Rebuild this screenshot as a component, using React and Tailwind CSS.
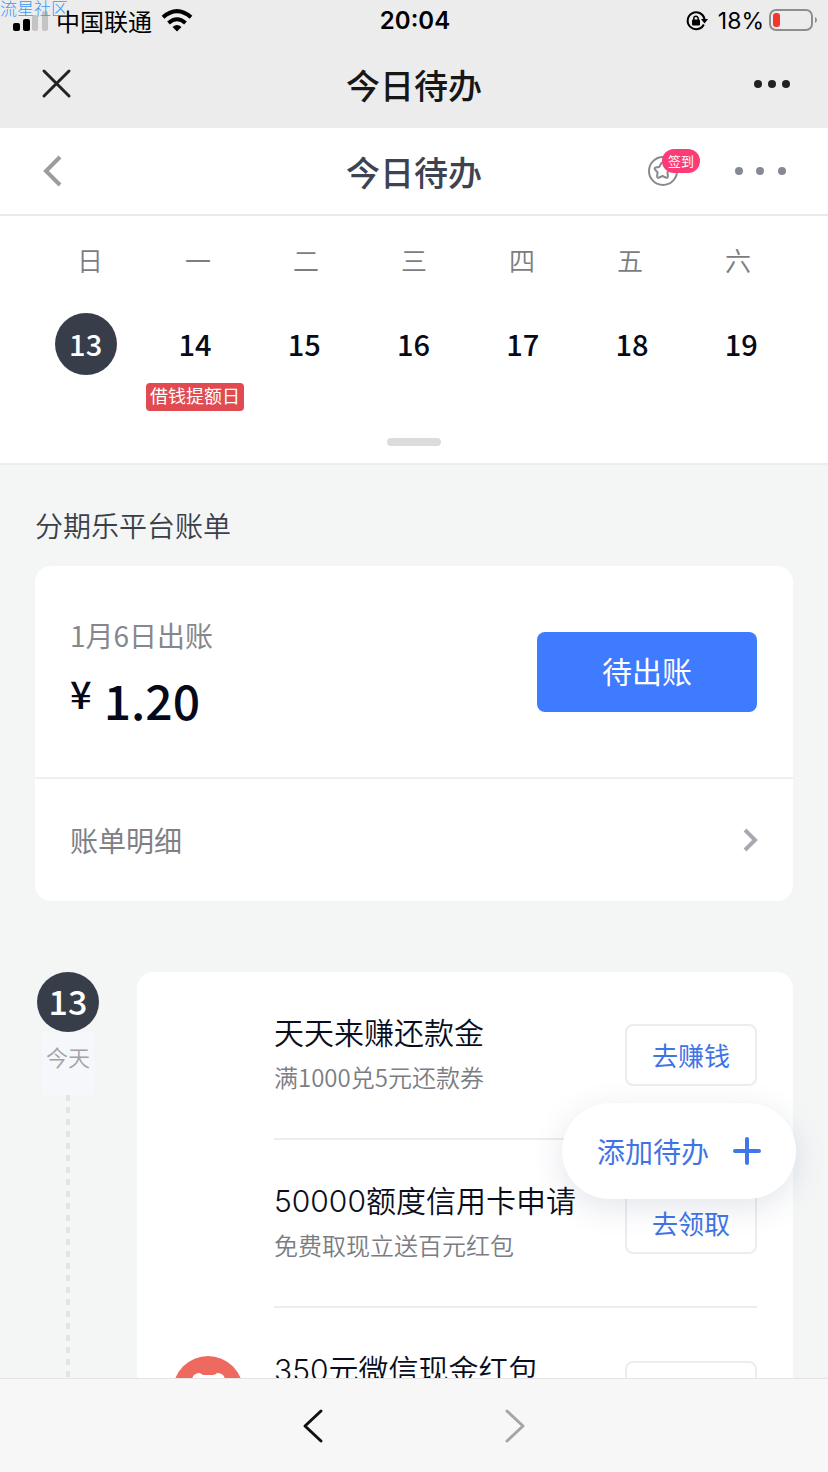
const DAYS = [
  { week: '日', date: 13, active: true },
  { week: '一', date: 14, tag: '借钱提额日' },
  { week: '二', date: 15 },
  { week: '三', date: 16 },
  { week: '四', date: 17 },
  { week: '五', date: 18 },
  { week: '六', date: 19 },
]

const TASKS = [
  { title: '天天来赚还款金', desc: '满1000兑5元还款券', action: '去赚钱' },
  { title: '50000额度信用卡申请', desc: '免费取现立送百元红包', action: '去领取' },
  { title: '350元微信现金红包', desc: '微信现金红包天天领', action: '去领取', icon: true },
]

function StatusBar() {
  return (
    <div className="relative grid grid-cols-3 items-center h-[42px] pl-3 pr-2.5 text-black">
      <span className="absolute left-0 top-0 text-[17px] leading-4 font-light text-[#3d97f5]">流星社区</span>
      <div className="flex items-center">
        <svg width="36" height="20" viewBox="0 0 36 20" aria-hidden="true">
          <rect x="1" y="12" width="7" height="8" rx="2" />
          <rect x="11" y="8" width="7" height="12" rx="2" />
          <rect x="20" y="4" width="6" height="16" rx="2" fill="#c4c4c4" />
          <rect x="30" y="0" width="6" height="20" rx="2" fill="#c4c4c4" />
        </svg>
        <span className="ml-2 text-[24px] leading-8">中国联通</span>
        <svg className="ml-2" width="34" height="24" viewBox="0 0 34 24" aria-hidden="true">
          <path d="M3 8.200Q17 -4 31 8.200" fill="none" stroke="#000" strokeWidth="4" />
          <path d="M8.500 14Q17 6.500 25.500 14" fill="none" stroke="#000" strokeWidth="4" />
          <path d="M12.500 18Q17 14 21.500 18L17 22.500Z" />
        </svg>
      </div>
      <span className="text-center font-[Inter,sans-serif] text-[24px] leading-8 font-semibold">20:04</span>
      <div className="flex items-center justify-end">
        <svg width="22" height="22" viewBox="0 0 22 22" fill="none" aria-hidden="true">
          <path d="M17.800 14.500A8.500 8.500 0 1 1 18.500 9" stroke="#000" strokeWidth="2" />
          <path d="M15 9H22L18.500 13.500Z" fill="#000" />
          <rect x="6" y="9.500" width="8" height="6" rx="1" fill="#000" />
          <path d="M7.800 10V8.500a2.200 2.200 0 0 1 4.400 0V10" stroke="#000" strokeWidth="1.500" />
        </svg>
        <span className="ml-2.5 font-[Inter,sans-serif] text-[23px] leading-8">18%</span>
        <svg className="ml-1" width="50" height="24" viewBox="0 0 50 24" aria-hidden="true">
          <rect x="2" y="1" width="42" height="20" rx="6" fill="none" stroke="#8e8e8e" strokeWidth="2" />
          <rect x="5" y="4" width="7" height="14" rx="3" fill="#f5362b" />
          <path d="M47 8v6q2-1 2-3t-2-3z" fill="#8e8e8e" />
        </svg>
      </div>
    </div>
  )
}

function BrowserHeader() {
  return (
    <div className="grid grid-cols-3 items-center h-[86px] pb-1 px-9">
      <button aria-label="关闭" className="justify-self-start p-1">
        <svg width="32" height="32" viewBox="0 0 32 32" stroke="#222" strokeWidth="3" strokeLinecap="round">
          <path d="M4 4L29 29M29 4L4 29" />
        </svg>
      </button>
      <h1 className="pt-1 text-center text-[34px] leading-10 font-medium text-[#171717]">今日待办</h1>
      <button aria-label="更多" className="justify-self-end">
        <svg width="40" height="12" viewBox="0 0 40 12" fill="#222">
          <circle cx="6" cy="7" r="4" />
          <circle cx="20" cy="7" r="4" />
          <circle cx="34" cy="7" r="4" />
        </svg>
      </button>
    </div>
  )
}

function PageHeader() {
  return (
    <div className="grid grid-cols-3 items-center h-[88px] px-10 bg-white border-b-2 border-[#e9e9e9]">
      <button aria-label="返回" className="justify-self-start">
        <svg width="24" height="32" viewBox="0 0 24 32" fill="none" stroke="#9c9c9e" strokeWidth="4">
          <path d="M20 2L6 16L20 30" />
        </svg>
      </button>
      <h2 className="pt-0.5 text-center text-[34px] leading-10 font-medium text-[#3d4350]">今日待办</h2>
      <div className="flex items-center justify-end gap-8">
        <button aria-label="签到" className="relative w-14 h-8">
          <svg width="36" height="32" viewBox="0 0 36 32" fill="none" stroke="#87898e" strokeWidth="2">
            <circle cx="19" cy="16" r="14" />
            <path
              d="M18.500 7.500q1 0 1.700 1.500l1.400 2.800 3.300.6q2.500.5.8 2.500l-2.300 2.500.5 3.600q0 2.500-2.200 1.500L18.500 21l-3.200 1.500q-2.200 1-2.200-1.500l.5-3.600-2.300-2.500q-1.700-2 .8-2.500l3.300-.6L16.800 9q.7-1.500 1.700-1.500z"
              strokeLinejoin="round"
            />
          </svg>
          <span className="absolute left-[18px] -top-1.5 rounded-full bg-[#fd3b77] px-1.5 text-[13px] leading-6 whitespace-nowrap text-white">
            签到
          </span>
        </button>
        <button aria-label="更多">
          <svg width="56" height="12" viewBox="0 0 56 12" fill="#858994">
            <circle cx="7" cy="6" r="4" />
            <circle cx="28" cy="6" r="4" />
            <circle cx="50" cy="6" r="4" />
          </svg>
        </button>
      </div>
    </div>
  )
}

function Calendar() {
  return (
    <section className="bg-white border-b-2 border-[#ebedee] pt-6">
      <div className="grid grid-cols-7 px-9">
        {DAYS.map((d) => (
          <span key={d.week} className="text-center text-[26px] leading-10 font-[350] text-[#7b7d82]">
            {d.week}
          </span>
        ))}
      </div>
      <div className="grid grid-cols-7 pl-[31px] pr-8 mt-[33px]">
        {DAYS.map((d) => (
          <div key={d.date} className="flex flex-col items-center h-[100px]">
            <button
              className={`size-[62px] rounded-full pb-0.5 text-[29px] leading-8 font-medium ${
                d.active ? 'bg-[#383d4a] text-white' : 'text-[#080a18]'
              }`}
            >
              {d.date}
            </button>
            {d.tag && (
              <span className="mt-2 rounded-sm bg-[#e04a50] px-1 pb-1 text-[18px] leading-6 whitespace-nowrap text-white">
                {d.tag}
              </span>
            )}
          </div>
        ))}
      </div>
      <div className="flex justify-center pt-[25px] pb-[17px]">
        <span className="w-[54px] h-2 rounded-full bg-[#dcdcde]" />
      </div>
    </section>
  )
}

function BillCard() {
  return (
    <section>
      <h3 className="text-[28px] leading-10 font-[350] text-[#3b3f49]">分期乐平台账单</h3>
      <div className="mt-[21px] rounded-2xl bg-white">
        <div className="flex items-center justify-between h-[211px] pl-[35px] pr-9">
          <div>
            <p className="text-[28px] leading-10 text-[#85878c]">1月6日出账</p>
            <p className="mt-4 pb-0.5 flex items-center gap-3 font-medium text-[#050919]">
              <span className="pb-3 text-[38px] leading-10">¥</span>
              <span className="text-[48px] leading-14">1.20</span>
            </p>
          </div>
          <button className="w-[220px] h-20 rounded-lg bg-[#3f7bff] pb-0.5 text-[30px] text-white">待出账</button>
        </div>
        <a href="#detail" className="flex items-center justify-between h-[124px] border-t-2 border-[#eef0f0] px-[35px] text-[28px] text-[#7f8186]">
          账单明细
          <svg width="16" height="24" viewBox="0 0 16 24" fill="none" stroke="#a9aab0" strokeWidth="4">
            <path d="M3 2L13 12L3 22" />
          </svg>
        </a>
      </div>
    </section>
  )
}

function TaskRow({ task, last }) {
  return (
    <li className="flex gap-[30px] h-[168px] pl-[35px] pr-9">
      <div className="flex items-center w-[72px] shrink-0">
        {task.icon && (
          <svg width="72" height="72" viewBox="0 0 72 72" aria-hidden="true">
            <circle cx="36" cy="35" r="35" fill="#ee6a61" />
            <path d="M20 26q0-5 2-7t6-2q2 2 4 2h9q2 0 4-2 4 0 6 2t2 7v26H20z" fill="#fff" />
          </svg>
        )}
      </div>
      <div className={`flex flex-1 items-center justify-between ${last ? '' : 'border-b-2 border-[#ededee]'}`}>
        <div>
          <p className="font-[Inter,'Noto_Sans_CJK_SC',sans-serif] text-[30px] leading-12 font-[350] whitespace-nowrap text-[#0a0e1c]">
            {task.title}
          </p>
          <p className="pb-1 text-[24px] leading-10 font-[350] whitespace-nowrap text-[#7b7d83]">{task.desc}</p>
        </div>
        <button className="w-[132px] h-[62px] shrink-0 rounded-lg border-2 border-[#ededf0] pb-0.5 text-[26px] text-[#3f74e6]">
          {task.action}
        </button>
      </div>
    </li>
  )
}

function Timeline() {
  return (
    <section className="flex mt-[71px]">
      <div className="flex flex-col items-center w-[66px] mr-9 shrink-0">
        <span className="flex items-center justify-center w-[62px] h-[60px] rounded-[50%] bg-[#383d4a] pb-0.5 text-[34px] leading-10 font-medium text-white">
          13
        </span>
        <span className="h-[63px] bg-[#f5f7fa] px-1 text-[22px] leading-12 font-[350] text-[#a0a2a7]">今天</span>
        <span className="flex-1 w-1 bg-[repeating-linear-gradient(to_bottom,#e2e4e9_0px,#e2e4e9_6px,transparent_6px,transparent_12px)]" />
      </div>
      <ul className="flex-1 rounded-2xl bg-white">
        {TASKS.map((t, i) => (
          <TaskRow key={t.title} task={t} last={i === TASKS.length - 1} />
        ))}
      </ul>
    </section>
  )
}

export default function App() {
  return (
    <div className="relative flex flex-col h-screen bg-[#f4f6f6] font-['Noto_Sans_CJK_SC',sans-serif]">
      <header className="bg-[#ececec]">
        <StatusBar />
        <BrowserHeader />
      </header>

      <main className="flex-1 min-h-0 overflow-y-auto [scrollbar-width:none]">
        <PageHeader />
        <Calendar />
        <div className="px-[35px] pt-10 pb-10">
          <BillCard />
          <Timeline />
        </div>
      </main>

      <button className="absolute right-8 bottom-[273px] flex items-center gap-6 h-24 rounded-full bg-white px-[35px] text-[28px] text-[#3f74e6] shadow-[0_8px_32px_rgba(60,70,110,0.14)]">
        添加待办
        <svg width="28" height="28" viewBox="0 0 28 28" stroke="#4076e8" strokeWidth="4" strokeLinecap="round">
          <path d="M14 2V26M2 14H26" />
        </svg>
      </button>

      <nav className="flex items-center justify-center gap-[174px] h-[94px] border-t border-[#e4e4e4] bg-[#f7f7f7]">
        <button aria-label="后退">
          <svg width="28" height="36" viewBox="0 0 28 36" fill="none" stroke="#111" strokeWidth="3" strokeLinecap="round" strokeLinejoin="round">
            <path d="M22 3L6 18L22 33" />
          </svg>
        </button>
        <button aria-label="前进">
          <svg width="28" height="36" viewBox="0 0 28 36" fill="none" stroke="#a5a5a5" strokeWidth="3" strokeLinecap="round" strokeLinejoin="round">
            <path d="M6 3L22 18L6 33" />
          </svg>
        </button>
      </nav>
    </div>
  )
}
